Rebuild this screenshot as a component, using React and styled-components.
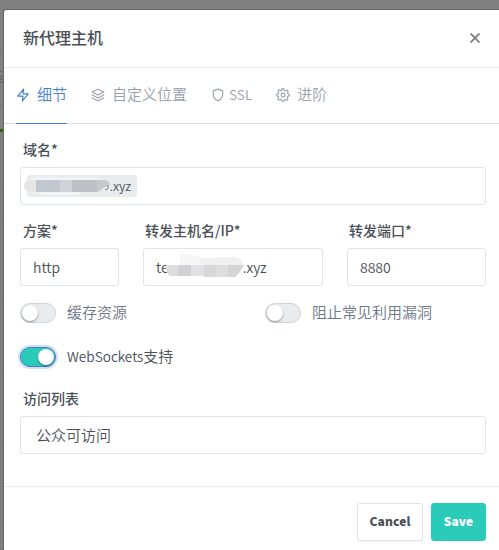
import React from 'react';
import styled, { createGlobalStyle } from 'styled-components';
import { FiZap, FiLayers, FiShield } from 'react-icons/fi';

const GlobalStyle = createGlobalStyle`
    * {
        box-sizing: border-box;
    }
    body {
        margin: 0;
        font-family: 'Noto Sans CJK SC', 'Noto Sans', sans-serif;
        font-size: 15px;
        color: #495057;
    }
`

/** page behind the modal */
const Backdrop = styled.div`
    width: 499px;
    height: 550px;
    padding-top: 9px;
    display: flex;
    flex-direction: column;
    overflow: hidden;
    background-color: #808080;
`
const Columns = styled.div`
    flex: 1;
    min-height: 0;
    display: flex;
`
const PageEdge = styled.div`
    width: 3px;
    flex: none;
    display: flex;
    flex-direction: column;
`
const EdgeRow = styled.div`
    flex: none;
    height: ${props => props.$height}px;
    border-bottom: ${props => props.$line || 1}px solid ${props => props.$color || '#737373'};
    background-color: ${props => props.$card ? '#807f7e' : 'transparent'};
`
const EdgeMarks = styled.svg`
    display: block;
    margin-top: 21px;
`

/** modal */
const Modal = styled.div`
    flex: 1;
    display: flex;
    flex-direction: column;
    background-color: #fff;
    border: 1px solid #666;
    border-right: 0;
    border-bottom: 0;
    border-radius: 3px 0 0 0;
`
const Header = styled.div`
    flex: none;
    height: 58px;
    padding: 0 16px 3px 19px;
    display: flex;
    align-items: center;
    justify-content: space-between;
    border-bottom: 1px solid #e9ecef;
`
const Title = styled.h5`
    margin: 0;
    font-size: 16px;
    font-weight: 500;
    line-height: 24px;
`
const CloseButton = styled.button`
    width: 16px;
    height: 16px;
    padding: 0;
    margin-top: 2px;
    display: flex;
    align-items: center;
    justify-content: center;
    border: 0;
    background: none;
    color: #808080;
`
const Tabs = styled.div`
    flex: none;
    height: 56px;
    padding-left: 12px;
    display: flex;
    gap: 24px;
    border-bottom: 1px solid #dee2e6;
`
const Tab = styled.div`
    height: 56px;
    padding-bottom: 4px;
    display: flex;
    align-items: center;
    font-size: ${props => props.$size || 15}px;
    font-weight: 350;
    color: ${props => props.$active ? '#467fcf' : '#9aa0ac'};
    border-bottom: 1px solid ${props => props.$active ? '#467fcf' : 'transparent'};

    svg {
        flex: none;
        width: 14px;
        height: 14px;
        margin-top: 3px;
        margin-right: ${props => props.$gap}px;
    }
`
const Body = styled.div`
    flex: none;
    height: 363px;
    padding: 15px 13px 0 16px;
    border-bottom: 1px solid #e9ecef;
`
const Field = styled.div`
    width: ${props => props.$width ? props.$width + 'px' : 'auto'};
    margin-bottom: ${props => props.$last ? 0 : 15}px;
`
const Label = styled.label`
    display: block;
    height: 21px;
    margin-bottom: 7px;
    padding-left: ${props => props.$inset || 3}px;
    font-size: 14px;
    font-weight: 500;
    line-height: 21px;
`
const Control = styled.div`
    height: 38px;
    padding: 0 12px;
    display: flex;
    align-items: center;
    background-color: #fff;
    border: 1px solid #dfe3ec;
    border-radius: 3px;
    color: #495057;
    font-size: 14px;
    font-weight: 350;
    padding-left: ${props => props.$inset || 12}px;
`
const Select = styled(Control)`
    padding: 0 15px 2px;
    font-size: 15px;
`
const Tag = styled.span`
    width: 110px;
    height: 22px;
    padding: 0 6px 2px 0;
    display: flex;
    align-items: center;
    justify-content: flex-end;
    background-color: #e9ecef;
    border-radius: 3px;
    font-size: 12.5px;
`
const Row = styled.div`
    display: flex;
    gap: 24px;
`
const Switches = styled.div`
    display: grid;
    grid-template-columns: 245px 1fr;
    row-gap: 20px;
    margin-bottom: 19px;
`
const Switch = styled.div`
    height: 24px;
    display: flex;
    align-items: center;
    color: ${props => props.$on ? '#495057' : '#6e7687'};
`
const SwitchText = styled.span`
    padding-bottom: 2px;
    font-weight: 350;
    line-height: 22px;
`
const Latin = styled.span`
    font-size: 13.6px;
`
const Track = styled.span`
    width: 36px;
    height: 20px;
    margin-right: 11px;
    padding: 0 1px;
    display: flex;
    align-items: center;
    justify-content: ${props => props.$on ? 'flex-end' : 'flex-start'};
    background-color: ${props => props.$on ? '#2bcbba' : '#e9ecef'};
    border: 1px solid ${props => props.$on ? '#467fcf' : '#ced4da'};
    border-radius: 10px;
    box-shadow: ${props => props.$on ? '0 0 0 2px rgba(70, 127, 207, 0.25)' : 'none'};
`
const Knob = styled.span`
    width: 16px;
    height: 16px;
    background-color: #fff;
    border-radius: 50%;
    box-shadow: 0 1px 2px 0 rgba(0, 0, 0, 0.4);
`
const Footer = styled.div`
    flex: none;
    height: 63px;
    padding: 16px 13px 0 0;
    display: flex;
    justify-content: flex-end;
    gap: 8px;
`
const Button = styled.button`
    width: ${props => props.$width}px;
    height: 38px;
    padding: 0 0 3px;
    border: 1px solid ${props => props.$primary ? '#2bcbba' : '#dfe3ec'};
    border-radius: 3px;
    background-color: ${props => props.$primary ? '#2bcbba' : '#fff'};
    box-shadow: ${props => props.$primary ? 'none' : '0 1px 1px 0 rgba(0, 0, 0, 0.05)'};
    color: ${props => props.$primary ? '#fff' : '#495057'};
    font-family: inherit;
    font-size: 12px;
    font-weight: 800;
    letter-spacing: 0.1px;
`

/** blurred-out parts of the host names */
const DomainMask = () => (
    <svg width='88' height='24' viewBox='0 0 88 24'>
        <path d='M6 3 L20 2 L72 3 L86 7 L83 14 L60 17 L52 20 L20 20 L4 15 Z' fill='#f2f4f6' />
        <path d='M6 5 H12 V17 H6 Q0 17 0 11 Q0 5 6 5Z' fill='#e8e6e5' />
        <path d='M12 5h24v12h-24z' fill='#c2c8d0' />
        <path d='M36 5h12v12h-12z' fill='#cfd2d8' />
        <path d='M48 5h25v12h-25z' fill='#bfc0c5' />
        <path d='M73 5h9q4 2 4 5l-8 4q-2 3-5 3z' fill='#c7c9cf' />
        <path d='M81 14.500h1.500q1.500 0 1.500-2v-2' fill='none' stroke='#6b7075' />
    </svg>
)
const HostMask = () => (
    <svg width='80' height='26' viewBox='0 0 80 26'>
        <path d='M15 1h13v2h8v10h-21z' fill='#f7f7f7' />
        <path d='M36 5h14v-1h20q8 2 8 9h-42z' fill='#f0f0f1' />
        <path d='M1 12h12v11h-8q-5-4-4-11z' fill='#dddddf' />
        <path d='M13 12h13v11h-13z' fill='#d2d2d4' />
        <path d='M26 12h13v11h-13z' fill='#e2e2e4' />
        <path d='M39 12h12v12h-12z' fill='#d8d8da' />
        <path d='M51 12h12v12h-12z' fill='#dededf' />
        <path d='M63 12h16l-4 7-5 5h-7z' fill='#d5d5d7' />
    </svg>
)
const MaskWrap = styled.span`
    position: absolute;
    left: ${props => props.$left}px;
    top: ${props => props.$top}px;
    line-height: 0;
`
const Masked = styled.span`
    position: relative;
    display: flex;
    align-items: center;
`
const MaskGap = styled.span`
    width: ${props => props.$width}px;
`

const GearIcon = () => (
    <svg viewBox='0 0 24 24' fill='none' stroke='currentColor' strokeWidth='2' strokeLinecap='round' strokeLinejoin='round'>
        <circle cx='12' cy='12' r='3.2' />
        <path d='M9.6 3.4C10 1.6 11 1 12 1s2 .6 2.4 2.4c.3 1.1 1.3 1.500 2.300.9 1.500-1 2.700-.7 3.400 0s1 1.900 0 3.400c-.6 1-.2 2 .9 2.300C22.400 10 23 11 23 12s-.6 2-2.400 2.400c-1.100.3-1.500 1.300-.9 2.300 1 1.500.7 2.700 0 3.400s-1.900 1-3.400 0c-1-.6-2-.2-2.300.9C14 22.400 13 23 12 23s-2-.6-2.400-2.400c-.3-1.100-1.300-1.500-2.300-.9-1.500 1-2.700.7-3.400 0s-1-1.900 0-3.400c.6-1 .2-2-.9-2.300C1.600 14 1 13 1 12s.6-2 2.400-2.400c1.100-.3 1.500-1.300.9-2.300-1-1.500-.7-2.700 0-3.400s1.900-1 3.400 0c1 .6 2 .2 2.300-.9z' />
    </svg>
)

const App = () => {
    return (
        <>
            <GlobalStyle />
            <Backdrop>
                <Columns>
                    <PageEdge>
                        <EdgeRow $height={41} />
                        <EdgeRow $height={55}>
                            <EdgeMarks width='3' height='12' stroke='#626262' fill='none'>
                                <path d='M0 .5h2M0 5.500h3M0 8.500l3-1M0 11.500h3' />
                            </EdgeMarks>
                        </EdgeRow>
                        <EdgeRow $height={27} $line={3} $color='#316100' />
                        <EdgeRow $height={54} $card />
                        <EdgeRow $height={38} $card />
                        <EdgeRow $height={75} $card />
                        <EdgeRow $height={74} $card />
                        <EdgeRow $height={75} $card />
                        <EdgeRow $height={75} $card />
                        <EdgeRow $height={27} $card />
                    </PageEdge>
                    <Modal>
                        <Header>
                            <Title>新代理主机</Title>
                            <CloseButton aria-label='Close'>
                                <svg width='10' height='10' viewBox='0 0 10 10' stroke='currentColor' strokeWidth='1.9'>
                                    <path d='M.5.5l9 9M9.500.5l-9 9' />
                                </svg>
                            </CloseButton>
                        </Header>
                        <Tabs>
                            <Tab $active $gap={7}><FiZap />细节</Tab>
                            <Tab $gap={7}><FiLayers />自定义位置</Tab>
                            <Tab $gap={4} $size={13.6}><FiShield />SSL</Tab>
                            <Tab $gap={7}><GearIcon />进阶</Tab>
                        </Tabs>
                        <Body>
                            <Field>
                                <Label>域名*</Label>
                                <Control $inset={6}>
                                    <Masked>
                                        <Tag>.xyz</Tag>
                                        <MaskWrap $left={-3} $top={0}><DomainMask /></MaskWrap>
                                    </Masked>
                                </Control>
                            </Field>
                            <Row>
                                <Field $width={99}>
                                    <Label>方案*</Label>
                                    <Control>http</Control>
                                </Field>
                                <Field $width={180}>
                                    <Label $inset={2}>转发主机名/IP*</Label>
                                    <Control>
                                        <Masked>
                                            te<MaskGap $width={74} />.xyz
                                            <MaskWrap $left={9} $top={-4}><HostMask /></MaskWrap>
                                        </Masked>
                                    </Control>
                                </Field>
                                <Field $width={139}>
                                    <Label $inset={2}>转发端口*</Label>
                                    <Control>8880</Control>
                                </Field>
                            </Row>
                            <Switches>
                                <Switch><Track><Knob /></Track><SwitchText>缓存资源</SwitchText></Switch>
                                <Switch><Track><Knob /></Track><SwitchText>阻止常见利用漏洞</SwitchText></Switch>
                                <Switch $on><Track $on><Knob /></Track><SwitchText><Latin>WebSockets</Latin>支持</SwitchText></Switch>
                            </Switches>
                            <Field $last>
                                <Label>访问列表</Label>
                                <Select>公众可访问</Select>
                            </Field>
                        </Body>
                        <Footer>
                            <Button $width={66}>Cancel</Button>
                            <Button $width={55} $primary>Save</Button>
                        </Footer>
                    </Modal>
                </Columns>
            </Backdrop>
        </>
    )
}

export default App;
